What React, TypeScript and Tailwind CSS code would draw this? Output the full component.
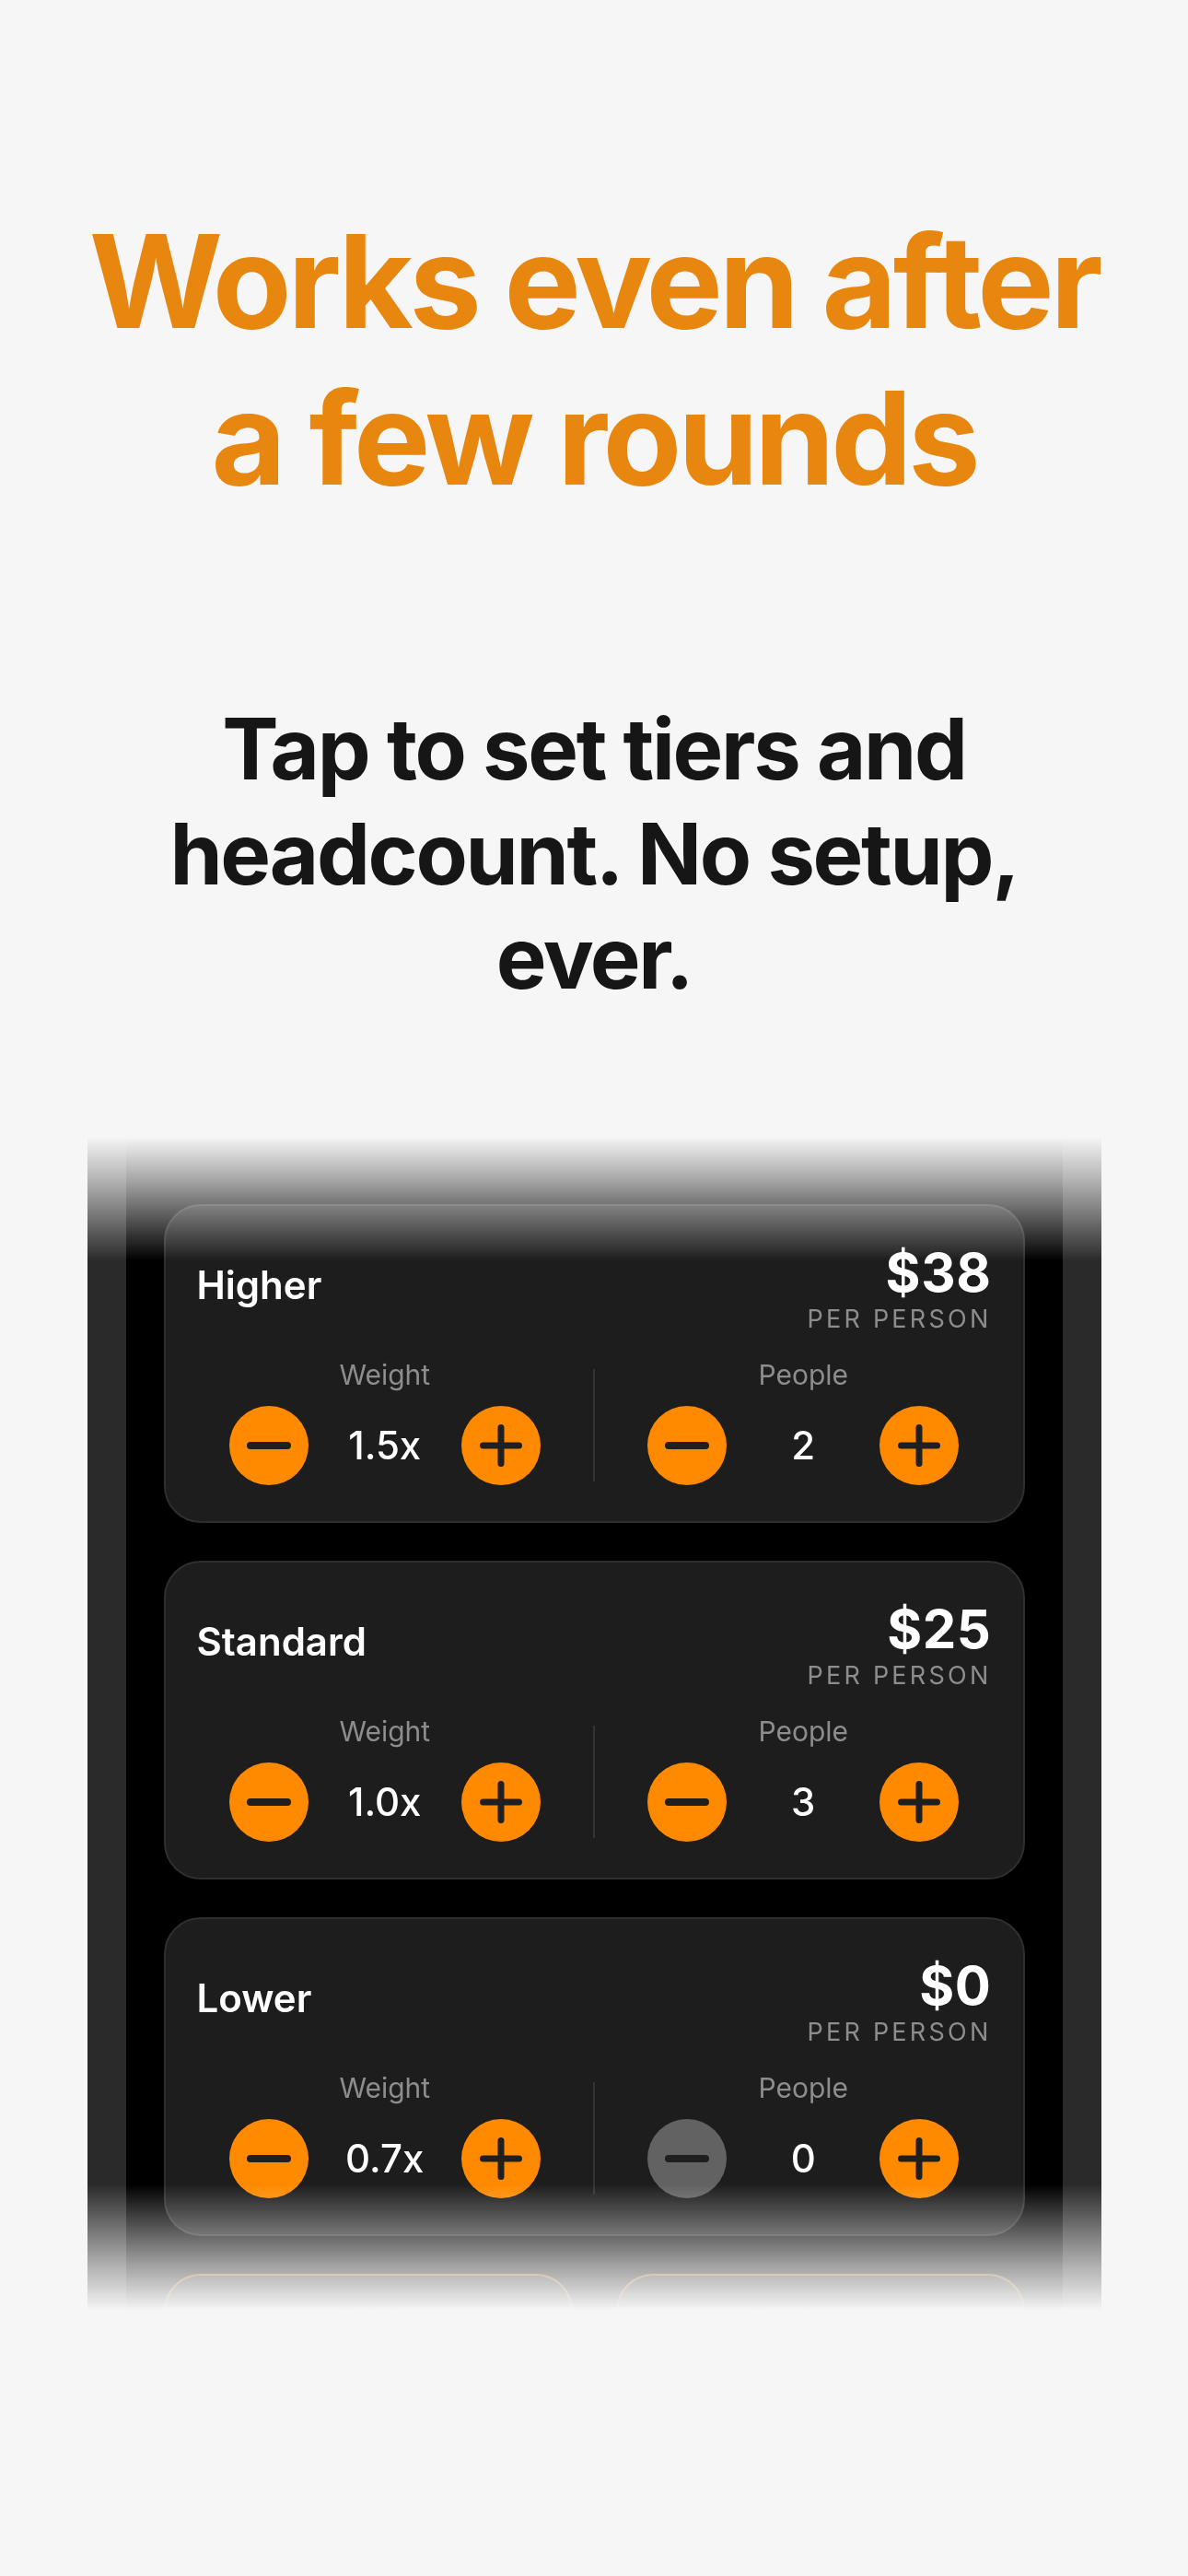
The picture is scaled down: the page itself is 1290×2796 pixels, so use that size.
import React from 'react';

interface ITier {
  name: string;
  price: string;
  weight: string;
  people: string;
  canRemove: boolean;
}

const tiers: ITier[] = [
  { name: 'Higher', price: '$38', weight: '1.5x', people: '2', canRemove: true },
  { name: 'Standard', price: '$25', weight: '1.0x', people: '3', canRemove: true },
  { name: 'Lower', price: '$0', weight: '0.7x', people: '0', canRemove: false },
];

function RoundButton({ kind, disabled = false }: { kind: 'minus' | 'plus'; disabled?: boolean }) {
  return (
    <button
      type="button"
      className={`flex h-[86px] w-[86px] shrink-0 items-center justify-center rounded-full ${disabled ? 'bg-[#626262]' : 'bg-[#ff8a00]'}`}
    >
      <svg className="h-[86px] w-[86px]" viewBox="0 0 86 86" fill="none" stroke="#1f1f1f" strokeLinecap="round">
        {kind === 'minus' ? (
          <path d="M23 43h40" strokeWidth="8" />
        ) : (
          <path d="M23.5 43h39M43 23.5v39" strokeWidth="7" />
        )}
      </svg>
    </button>
  );
}

function Stepper({ label, value, canRemove }: { label: string; value: string; canRemove: boolean }) {
  return (
    <div className="flex flex-1 flex-col items-center">
      <p className="text-[30px] leading-[36px] text-[#8d8d8d]">{label}</p>
      <div className="mt-[16px] flex items-center gap-[40px]">
        <RoundButton kind="minus" disabled={!canRemove} />
        <span className="w-[86px] text-center text-[42px] font-medium leading-[50px] text-white">{value}</span>
        <RoundButton kind="plus" />
      </div>
    </div>
  );
}

function TierCard({ name, price, weight, people, canRemove }: ITier) {
  return (
    <div className="rounded-[40px] border-2 border-[#2f2f2f] bg-[#1d1d1d] px-[34px] pb-[39px] pt-[43px]">
      <div className="flex items-center justify-between">
        <h3 className="mb-[8px] text-[42px] font-semibold leading-[50px] text-white">{name}</h3>
        <div className="text-right">
          <p className="text-[58px] font-bold leading-[58px] tracking-[0.01em] text-white">{price}</p>
          <p className="mt-[7px] text-[27px] leading-[30px] tracking-[0.12em] text-[#8d8d8d]">PER PERSON</p>
        </div>
      </div>
      <div className="mx-[-22px] mt-[27px] flex">
        <Stepper label="Weight" value={weight} canRemove />
        <div className="mb-[4px] h-[122px] w-[2px] self-end bg-[#343434]" />
        <Stepper label="People" value={people} canRemove={canRemove} />
      </div>
    </div>
  );
}

export default function App() {
  return (
    <div className="min-h-[2796px] w-full bg-[#f6f6f6] font-['Inter',sans-serif]">
      <div className="pt-[220px] text-center">
        <h1 className="text-[140px] font-bold leading-[170px] tracking-[-0.03em] text-[#e8870f]">
          Works even after
          <br />
          a few rounds
        </h1>
        <p className="mt-[196px] text-[92px] font-bold leading-[113.5px] tracking-[-0.025em] text-[#161616]">
          Tap to set tiers and
          <br />
          headcount. No setup,
          <br />
          ever.
        </p>
      </div>

      <div className="mx-auto mt-[137px] h-[1274px] w-[1101px] overflow-hidden bg-[#2a2a2a] px-[42px] [-webkit-mask-image:linear-gradient(to_bottom,transparent_0px,rgba(0,0,0,0.35)_50px,black_134px,black_calc(100%_-_137px),rgba(0,0,0,0.35)_calc(100%_-_50px),transparent_100%)] [mask-image:linear-gradient(to_bottom,transparent_0px,rgba(0,0,0,0.35)_50px,black_134px,black_calc(100%_-_137px),rgba(0,0,0,0.35)_calc(100%_-_50px),transparent_100%)]">
        <div className="flex h-full flex-col gap-[41px] bg-black px-[41px] pt-[73px]">
          {tiers.map((t) => (
            <TierCard key={t.name} {...t} />
          ))}
          <div className="grid grid-cols-2 gap-[47px]">
            <div className="h-[200px] rounded-[40px] border-2 border-[#ff8a00]/50 bg-[#1d1d1d] pt-[24px] text-center text-[30px] text-[#8d8d8d]">Total</div>
            <div className="h-[200px] rounded-[40px] border-2 border-[#ff8a00]/50 bg-[#1d1d1d] pt-[24px] text-center text-[30px] text-[#8d8d8d]">Each pays</div>
          </div>
        </div>
      </div>
    </div>
  );
}
